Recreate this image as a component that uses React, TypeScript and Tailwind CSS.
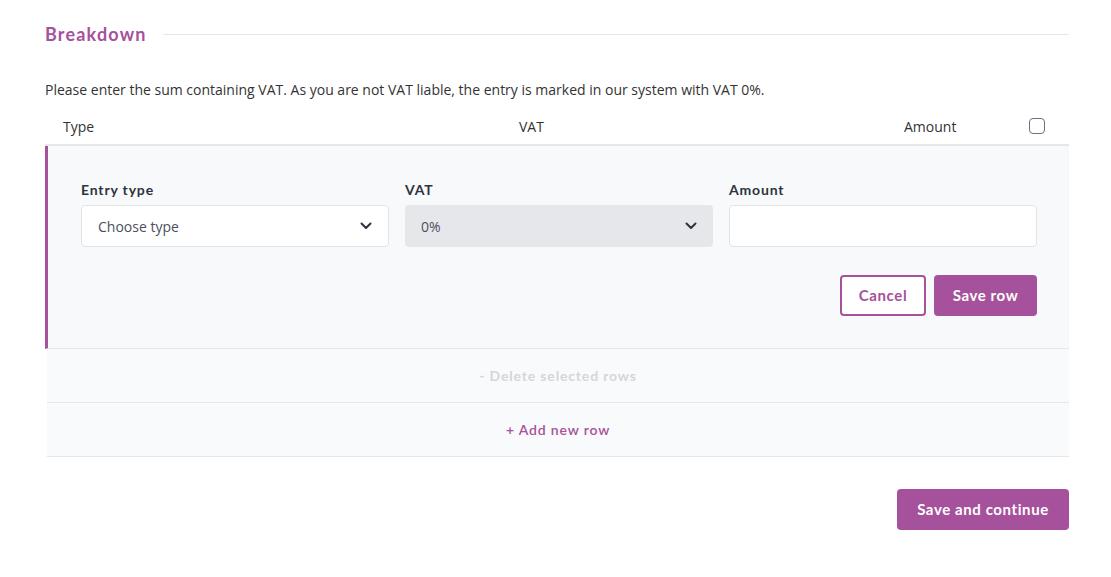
import React from "react";

function Chevron() {
  return (
    <svg width="12" height="8" viewBox="0 0 12 8" fill="none">
      <path d="M1.5 1.5L6 6L10.5 1.5" stroke="#2d3340" strokeWidth="2" strokeLinecap="round" strokeLinejoin="round" />
    </svg>
  );
}

export default function App() {
  const head = "font-['Lato',sans-serif]";
  return (
    <div className="w-[1111px] h-[577px] bg-white font-['Open_Sans',sans-serif] text-[#333]">
      <div className="ml-[45px] w-[1024px] pt-[22px]">
        <div className="flex items-center gap-[16px]">
          <h2 className={`${head} text-[18px] font-bold tracking-[0.065em] text-[#a6519b] leading-[24px]`}>Breakdown</h2>
          <div className="flex-1 h-px bg-[#e5e7eb]" />
        </div>
        <p className="mt-[34px] text-[14px] leading-[20px] text-[#333]">
          Please enter the sum containing VAT. As you are not VAT liable, the entry is marked in our system with VAT 0%.
        </p>
        <div className="mt-[12px] flex items-center h-[28px] text-[14px] text-[#333]">
          <div className="pl-[18px] w-[474px]">Type</div>
          <div className="flex-1">VAT</div>
          <div className="w-[125px]">Amount</div>
          <div className="w-[40px] flex justify-start">
            <div className="w-[16px] h-[16px] rounded-[4px] border border-[#6b7280] bg-white" />
          </div>
        </div>
        <div className="mt-[4px] h-[2px] bg-[#e5e7eb]" />
        <div className="border-l-[3px] border-[#a6519b] bg-[#f8f9fb] pl-[33px] pr-[32px] pt-[35px] pb-[32px] border-b border-b-[#e5e7eb]">
          <div className="grid grid-cols-3 gap-[16px]">
            {[
              { l: "Entry type", v: "Choose type", sel: true, dis: false },
              { l: "VAT", v: "0%", sel: true, dis: true },
              { l: "Amount", v: "", sel: false, dis: false },
            ].map((f) => (
              <div key={f.l}>
                <div className={`${head} text-[14px] font-bold tracking-[0.06em] text-[#2d3340] leading-[18px] mb-[6px]`}>{f.l}</div>
                <div
                  className={`h-[42px] rounded-[4px] flex items-center justify-between pl-[16px] pr-[16px] text-[14px] text-[#4b5060] ${
                    f.dis ? "bg-[#e6e7ea]" : "bg-white border border-[#e2e4e8]"
                  }`}
                >
                  <span>{f.v}</span>
                  {f.sel && <Chevron />}
                </div>
              </div>
            ))}
          </div>
          <div className="mt-[28px] flex justify-end gap-[8px]">
            <button className={`${head} w-[86px] h-[41px] rounded-[4px] border-2 border-[#a6519b] bg-white text-[#a6519b] text-[15px] font-bold tracking-[0.04em]`}>
              Cancel
            </button>
            <button className={`${head} w-[103px] h-[41px] rounded-[4px] bg-[#a6519b] text-white text-[15px] font-bold tracking-[0.04em]`}>
              Save row
            </button>
          </div>
        </div>
        <div className="ml-[2px] bg-[#f9fafb]">
          <div className={`${head} h-[54px] flex items-center justify-center border-b border-[#e5e7eb] text-[14px] font-bold tracking-[0.06em] text-[#d4d6db]`}>
            - Delete selected rows
          </div>
          <div className={`${head} h-[54px] flex items-center justify-center border-b border-[#e5e7eb] text-[14px] font-semibold tracking-[0.06em] text-[#a6519b]`}>
            + Add new row
          </div>
        </div>
        <div className="mt-[32px] flex justify-end">
          <button className={`${head} w-[172px] h-[41px] rounded-[4px] bg-[#a6519b] text-white text-[15px] font-bold tracking-[0.04em]`}>
            Save and continue
          </button>
        </div>
      </div>
    </div>
  );
}
